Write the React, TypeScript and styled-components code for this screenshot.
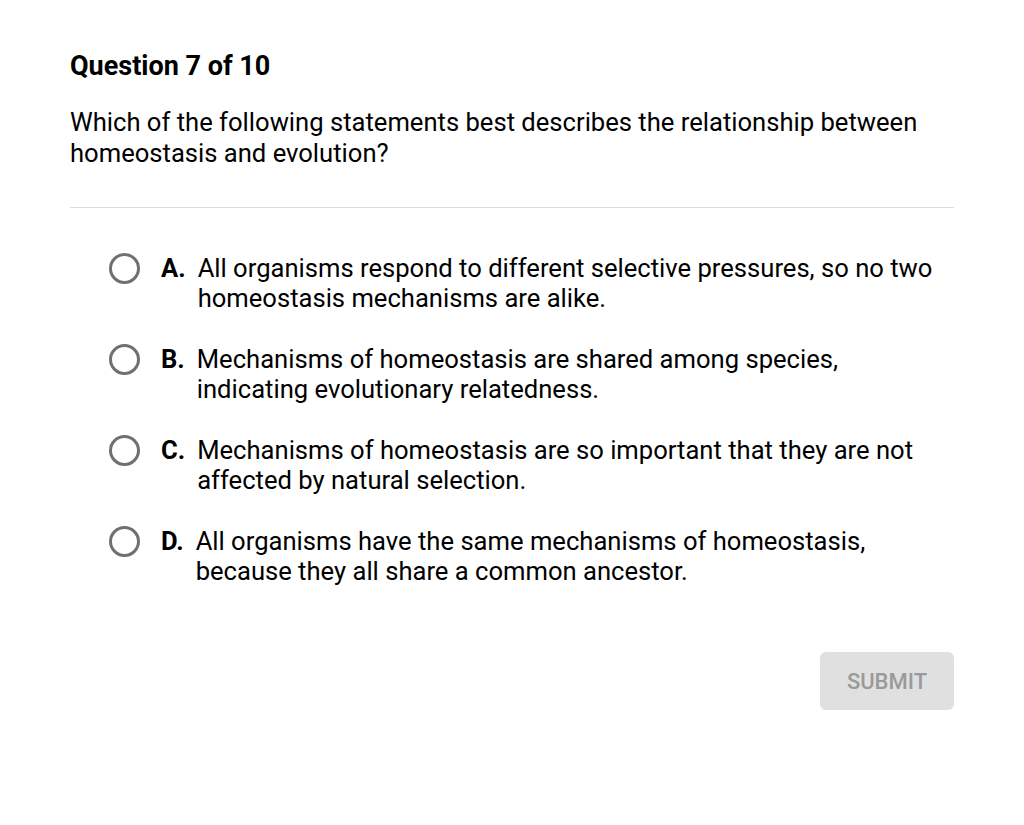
import styled, { createGlobalStyle } from "styled-components";

const GlobalStyle = createGlobalStyle`
  html, body {
    margin: 0;
    padding: 0;
    background: #ffffff;
  }
  body {
    font-family: Roboto, "Liberation Sans", Arial, sans-serif;
    color: #000;
  }
`;

const options = [
  {
    letter: "A.",
    text: "All organisms respond to different selective pressures, so no two homeostasis mechanisms are alike.",
  },
  {
    letter: "B.",
    text: "Mechanisms of homeostasis are shared among species, indicating evolutionary relatedness.",
  },
  {
    letter: "C.",
    text: "Mechanisms of homeostasis are so important that they are not affected by natural selection.",
  },
  {
    letter: "D.",
    text: "All organisms have the same mechanisms of homeostasis, because they all share a common ancestor.",
  },
];

export default function App() {
  return (
    <>
      <GlobalStyle />
      <Page>
        <Title>Question 7 of 10</Title>
        <Prompt>
          Which of the following statements best describes the relationship
          between homeostasis and evolution?
        </Prompt>
        <Divider />
        <OptionList>
          {options.map((o) => (
            <Option key={o.letter}>
              <Radio />
              <Letter>{o.letter}</Letter>
              <OptionText>{o.text}</OptionText>
            </Option>
          ))}
        </OptionList>
        <Footer>
          <SubmitButton disabled>SUBMIT</SubmitButton>
        </Footer>
      </Page>
    </>
  );
}

const Page = styled.main`
  display: flex;
  flex-direction: column;
  width: 884px;
  padding: 50px 70px 0;
`;

const Title = styled.h1`
  margin: 0;
  font-size: 27px;
  line-height: 32px;
  font-weight: 700;
`;

const Prompt = styled.p`
  margin: 25px 0 0;
  font-size: 25.6px;
  line-height: 31px;
  font-weight: 400;
`;

const Divider = styled.div`
  height: 1px;
  margin-top: 38px;
  background: #dcdcdc;
`;

const OptionList = styled.div`
  display: flex;
  flex-direction: column;
  gap: 31px;
  margin-top: 45px;
  padding-left: 39px;
`;

const Option = styled.label`
  display: flex;
  align-items: flex-start;
  font-size: 25.6px;
  line-height: 30px;
  cursor: pointer;
`;

const Radio = styled.span`
  box-sizing: border-box;
  flex-shrink: 0;
  width: 31px;
  height: 31px;
  margin-right: 21px;
  border: 3px solid #707070;
  border-radius: 50%;
`;

const Letter = styled.span`
  flex-shrink: 0;
  font-weight: 700;
  margin-right: 12px;
`;

const OptionText = styled.span`
  max-width: 745px;
`;

const Footer = styled.div`
  display: flex;
  justify-content: flex-end;
  margin-top: 66px;
`;

const SubmitButton = styled.button`
  width: 134px;
  height: 58px;
  border: none;
  border-radius: 6px;
  background: #e0e0e0;
  color: #9a9a9a;
  font-family: Roboto, "Liberation Sans", Arial, sans-serif;
  font-size: 22px;
  font-weight: 500;
`;
